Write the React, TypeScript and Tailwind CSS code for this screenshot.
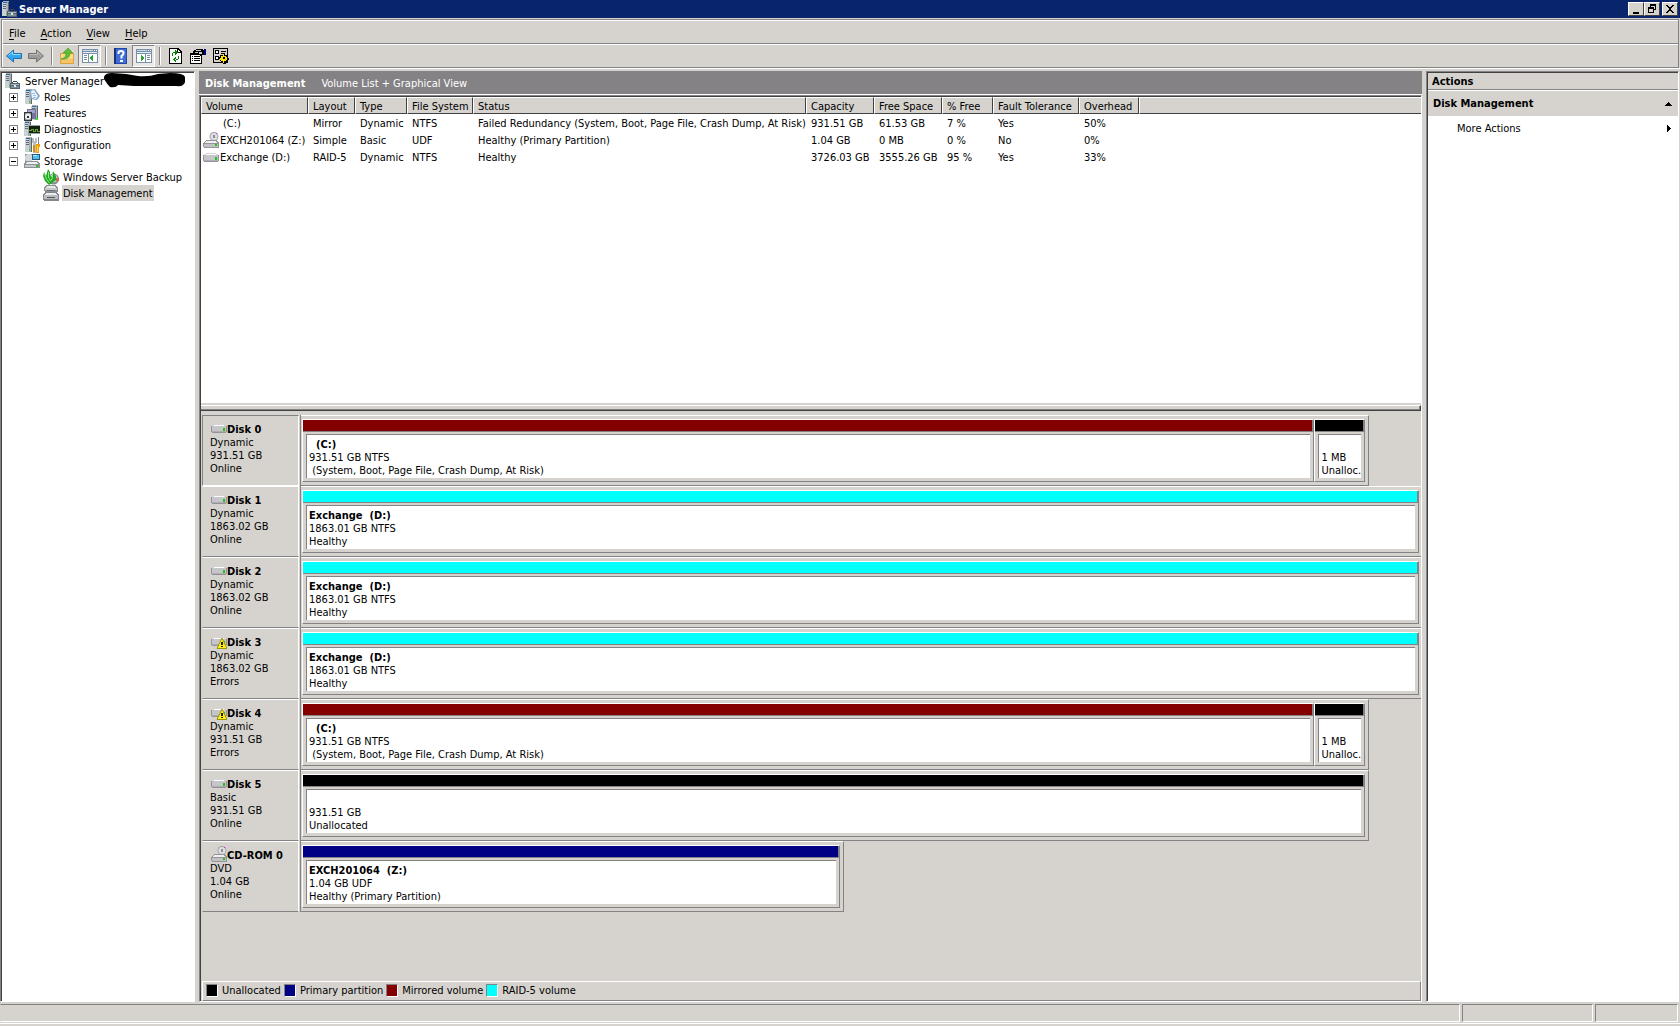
import type { ReactNode } from "react";
import clsx from "clsx";

type VolumeKind = "unallocated" | "primary" | "mirrored" | "raid5";
type DriveIconName = "drive" | "warning" | "cdrom";

interface DiskVolume {
  kind: VolumeKind;
  name?: string;
  size: string;
  status: string;
  narrow?: boolean;
}

interface Disk {
  name: string;
  icon: DriveIconName;
  type: string;
  size: string;
  state: string;
  width: number;
  selected?: boolean;
  volumes: DiskVolume[];
}

const kindColor: Record<VolumeKind, string> = {
  unallocated: "bg-black",
  primary: "bg-[#000084]",
  mirrored: "bg-[#840000]",
  raid5: "bg-[#00ffff]",
};

const columns = [
  { label: "Volume", width: "w-[107px]" },
  { label: "Layout", width: "w-[47px]" },
  { label: "Type", width: "w-[52px]" },
  { label: "File System", width: "w-[66px]" },
  { label: "Status", width: "w-[333px]" },
  { label: "Capacity", width: "w-[68px]" },
  { label: "Free Space", width: "w-[68px]" },
  { label: "% Free", width: "w-[51px]" },
  { label: "Fault Tolerance", width: "w-[86px]" },
  { label: "Overhead", width: "w-[60px]" },
];

const volumes: { name: string; icon?: DriveIconName; cells: string[] }[] = [
  {
    name: "(C:)",
    cells: ["Mirror", "Dynamic", "NTFS", "Failed Redundancy (System, Boot, Page File, Crash Dump, At Risk)", "931.51 GB", "61.53 GB", "7 %", "Yes", "50%"],
  },
  {
    name: "EXCH201064 (Z:)",
    icon: "cdrom",
    cells: ["Simple", "Basic", "UDF", "Healthy (Primary Partition)", "1.04 GB", "0 MB", "0 %", "No", "0%"],
  },
  {
    name: "Exchange (D:)",
    icon: "drive",
    cells: ["RAID-5", "Dynamic", "NTFS", "Healthy", "3726.03 GB", "3555.26 GB", "95 %", "Yes", "33%"],
  },
];

const systemVolumes: DiskVolume[] = [
  { kind: "mirrored", name: "  (C:)", size: "931.51 GB NTFS", status: " (System, Boot, Page File, Crash Dump, At Risk)" },
  { kind: "unallocated", size: "1 MB", status: "Unalloc.", narrow: true },
];

const exchangeVolumes: DiskVolume[] = [
  { kind: "raid5", name: "Exchange  (D:)", size: "1863.01 GB NTFS", status: "Healthy" },
];

const disks: Disk[] = [
  { name: "Disk 0", icon: "drive", type: "Dynamic", size: "931.51 GB", state: "Online", width: 95.4, selected: true, volumes: systemVolumes },
  { name: "Disk 1", icon: "drive", type: "Dynamic", size: "1863.02 GB", state: "Online", width: 100, volumes: exchangeVolumes },
  { name: "Disk 2", icon: "drive", type: "Dynamic", size: "1863.02 GB", state: "Online", width: 100, volumes: exchangeVolumes },
  { name: "Disk 3", icon: "warning", type: "Dynamic", size: "1863.02 GB", state: "Errors", width: 100, volumes: exchangeVolumes },
  { name: "Disk 4", icon: "warning", type: "Dynamic", size: "931.51 GB", state: "Errors", width: 95.4, volumes: systemVolumes },
  {
    name: "Disk 5",
    icon: "drive",
    type: "Basic",
    size: "931.51 GB",
    state: "Online",
    width: 95.4,
    volumes: [{ kind: "unallocated", size: "931.51 GB", status: "Unallocated" }],
  },
  {
    name: "CD-ROM 0",
    icon: "cdrom",
    type: "DVD",
    size: "1.04 GB",
    state: "Online",
    width: 48.5,
    volumes: [{ kind: "primary", name: "EXCH201064  (Z:)", size: "1.04 GB UDF", status: "Healthy (Primary Partition)" }],
  },
];

const legend: { kind: VolumeKind; label: string }[] = [
  { kind: "unallocated", label: "Unallocated" },
  { kind: "primary", label: "Primary partition" },
  { kind: "mirrored", label: "Mirrored volume" },
  { kind: "raid5", label: "RAID-5 volume" },
];

function Icon({ children }: { children: ReactNode }) {
  return (
    <svg width="16" height="16" viewBox="0 0 16 16" className="shrink-0" shapeRendering="crispEdges" aria-hidden="true">
      {children}
    </svg>
  );
}

/* ---- tree icons ---- */

function Tower({ x = 1 }: { x?: number }) {
  return (
    <g transform={`translate(${x} 0)`}>
      <path d="M0 1h1V0h6v15H0z" fill="#a9b0b6" />
      <path d="M0 1h4v14H0z" fill="#c9d0d6" />
      <path d="M1 3h3v1H1zM1 5h3v1H1zM1 7h3v1H1z" fill="#5d6c7c" />
      <path d="M1 1h4v1H1z" fill="#2c6f9e" />
      <path d="M6 1h1v14H6z" fill="#5f666c" />
      <path d="M4 12h1v2H4z" fill="#35e01e" />
    </g>
  );
}

function ServerIcon() {
  return (
    <Icon>
      <Tower x={0} />
      <path d="M5 10h10v6H5z" fill="#55626f" />
      <path d="M6 11h8v1H6z" fill="#a8b8c6" />
      <path d="M6 13h8v2H6z" fill="#7d8c9a" />
      <path d="M8 8h4v1H8zM7 9h1v1H7zM12 9h1v1h-1z" fill="#3c4650" />
      <path d="M9 12h2v2H9z" fill="#dfe6ec" />
    </Icon>
  );
}

function RolesIcon() {
  return (
    <Icon>
      <Tower />
      <path d="M6 1l5-1 5 7-3 4-6-1z" fill="#7fa3c0" shapeRendering="auto" />
      <path d="M7 2l3-1 4 6-2 3-4-1z" fill="#eaf5ff" shapeRendering="auto" />
      <path d="M8 4h3v1H8zM9 6h3v1H9zM9 8h3v1H9z" fill="#9fc4e4" />
    </Icon>
  );
}

function FeaturesIcon() {
  return (
    <Icon>
      <Tower x={7} />
      <path d="M3 4h9v10H3z" fill="#74749c" />
      <path d="M4 5h7v3H4z" fill="#a3a3ca" />
      <path d="M0 7h8v9H0z" fill="#34383e" />
      <path d="M1 8h6v7H1z" fill="#878d94" />
      <circle cx="4" cy="11.5" r="3" fill="#eee" shapeRendering="auto" />
      <path d="M3 11h2v2H3z" fill="#333" />
      <path d="M12 13h2v2h-2z" fill="#35e01e" />
    </Icon>
  );
}

function DiagnosticsIcon() {
  return (
    <Icon>
      <Tower x={0} />
      <path d="M4 4h12v9H4z" fill="#9aa3a8" />
      <path d="M5 5h11v7H5z" fill="#14210f" />
      <path d="M5 9h2v-1h2v2h2V8h2v2h3" fill="none" stroke="#6ca033" />
    </Icon>
  );
}

function ConfigurationIcon() {
  return (
    <Icon>
      <Tower x={1} />
      <path d="M8 1h2v3h1V1h2v4l-1 2v9H9V7L8 5z" fill="#b8bec4" />
      <path d="M9 8h2v7H9z" fill="#e08a00" />
      <path d="M14 0h1v7h-1z" fill="#7c848b" />
      <path d="M12 7h4v3h-1v6h-3z" fill="#f0a010" />
      <path d="M13 9h1v6h-1z" fill="#ffd35a" />
    </Icon>
  );
}

function StorageIcon() {
  return (
    <Icon>
      <path d="M1 1h7v8H1z" fill="#8d949a" />
      <circle cx="5" cy="5" r="4" fill="#d4d8dc" shapeRendering="auto" />
      <path d="M8 1h8v6H8z" fill="#2b587c" />
      <path d="M9 2h6v4H9z" fill="#52bff0" />
      <path d="M9 2h4v1H9z" fill="#bcecff" />
      <path d="M2 8h12l2 3v4H0v-4z" fill="#8e9296" />
      <path d="M3 9h10l1 2H1z" fill="#eceef0" />
      <path d="M1 12h13v2H1z" fill="#c6c9cc" />
      <path d="M12 12h2v2h-2z" fill="#1fc41f" />
    </Icon>
  );
}

function BackupIcon() {
  return (
    <Icon>
      <circle cx="10.500" cy="10" r="5.500" fill="#84888b" shapeRendering="auto" />
      <circle cx="10.500" cy="9.500" r="4" fill="#c9c9c9" shapeRendering="auto" />
      <path d="M13 9h3v3h-3z" fill="#c96b4c" />
      <path d="M5 0l2 3v4l2 1 1-6 3 5v4l-4 3-3 2-4-4-2-5 1-4 2 4z" fill="#27a52b" shapeRendering="auto" />
      <path d="M1.500 5l2 5 3 4M5.500 3v5l2 4 2-3V5" fill="none" stroke="#83ef70" shapeRendering="auto" />
    </Icon>
  );
}

function DiskManagementIcon() {
  return (
    <Icon>
      <path d="M3 0h10l2 3v3l-1 1H2L1 6V3z" fill="#8c8f93" />
      <path d="M4 1h8l1 2H3z" fill="#e6e7e8" />
      <path d="M2 3h12v2H2z" fill="#c6c8ca" />
      <path d="M4 5h8v1H4z" fill="#6e7276" />
      <path d="M2 7h12l2 3v5l-1 1H1l-1-1v-5z" fill="#83868a" />
      <path d="M3 8h10l1 2H2z" fill="#eceded" />
      <path d="M1 10h14v4H1z" fill="#b9bbbd" />
      <path d="M4 12h8v1H4z" fill="#54575a" />
    </Icon>
  );
}

/* ---- drive icons ---- */

function DriveIcon({ name }: { name: DriveIconName }) {
  if (name === "cdrom") {
    return (
      <Icon>
        <circle cx="11" cy="4.500" r="4.500" fill="#a4a4aa" shapeRendering="auto" />
        <circle cx="11" cy="4.500" r="3.500" fill="#dedee4" shapeRendering="auto" />
        <path d="M10 3h2v3h-2z" fill="#8c8c92" />
        <path d="M13 1h1v1h-1z" fill="#e020e0" />
        <path d="M3 8h10l3 3v4l-1 1H1l-1-1v-4z" fill="#949496" />
        <path d="M3 9h10l1 2H1z" fill="#f0f0f0" />
        <path d="M1 12h14v3H1z" fill="#c2c2c4" />
        <path d="M12 12h2v2h-2z" fill="#18c818" />
      </Icon>
    );
  }
  return (
    <Icon>
      <path d="M3 4h10v1h2v1h1v6h-1v1H1v-1H0V6h1V5h2z" fill="#949498" />
      <path d="M3 4h10v1h2v1H1V5h2z" fill="#d4d4d8" />
      <path d="M3 5h10v1H3z" fill="#fff" />
      <path d="M1 6h14v5H1z" fill="#c6c6ca" />
      <path d="M1 11h14v1H1z" fill="#adadb2" />
      <path d="M12 8h2v3h-2z" fill="#18c818" />
      {name === "warning" && (
        <g transform="translate(0 1)">
          <path d="M11 4L16 14.500H6z" fill="#fff01a" stroke="#9c9400" strokeWidth="1" strokeLinejoin="round" shapeRendering="auto" />
          <path d="M10 8h2v3h-2zM10 12h2v1h-2z" fill="#211f00" />
        </g>
      )}
    </Icon>
  );
}

/* ---- toolbar icons ---- */

function ArrowIcon({ back = false }: { back?: boolean }) {
  return (
    <svg width="16" height="16" viewBox="0 0 16 16" className="shrink-0" aria-hidden="true">
      <g transform={back ? undefined : "matrix(-1 0 0 1 16 0)"}>
        <path d="M.5 8L7.500 2v3.500h8v5h-8V14z" fill={back ? "#35a5ee" : "#9c9c9c"} stroke={back ? "#1b6fb4" : "#707070"} />
        <path d="M2.500 7.500L6.500 4v2.500h8" fill="none" stroke={back ? "#8fd9ff" : "#bdbdbd"} />
      </g>
    </svg>
  );
}

function UpFolderIcon() {
  return (
    <Icon>
      <path d="M1 5h5l1-2h7v2h1v11H1z" fill="#d9a441" />
      <path d="M2 6h12v8H2z" fill="#fbd98a" />
      <path d="M2 11h12v4H2z" fill="#f3c468" />
      <path d="M10 3h4v2h-4z" fill="#fff4cf" />
      <path d="M2 11c4-1 5-3 5-6H4l5-5 5 5h-3c0 4-3 7-9 6z" fill="#5cc034" stroke="#3a8a1e" strokeWidth=".5" shapeRendering="auto" />
    </Icon>
  );
}

function PaneIcon({ right = false }: { right?: boolean }) {
  return (
    <Icon>
      <path d="M0 1h16v14H0z" fill="#7890a8" />
      <path d="M1 2h10v1H1z" fill="#c9daea" />
      <path d="M12 2h1v1h-1zM14 2h1v1h-1z" fill="#fff" />
      <path d="M1 4h14v1H1z" fill="#e7eef5" />
      {right ? (
        <>
          <path d="M1 6h8v8H1zM10 6h5v8h-5z" fill="#fff" />
          <path d="M11 7h3v1h-3zM11 9h3v1h-3zM11 11h3v1h-3z" fill="#7890a8" />
          <path d="M5 7h1v1h1v1h1v2H7v1H6v1H5z" fill="#2fa52f" />
        </>
      ) : (
        <>
          <path d="M1 6h5v8H1zM7 6h8v8H7z" fill="#fff" />
          <path d="M2 7h3v1H2zM2 9h3v1H2zM2 11h3v1H2z" fill="#7890a8" />
          <path d="M11 7h-1v1H9v1H8v2h1v1h1v1h1z" fill="#2fa52f" />
        </>
      )}
    </Icon>
  );
}

function HelpIcon() {
  return (
    <Icon>
      <path d="M1 0h13v16H1z" fill="#2347a8" />
      <path d="M3 1h10v14H3z" fill="#3f6fd6" />
      <path d="M1 0h2v16H1z" fill="#17337c" />
      <path d="M5.500 6V4.500Q5.500 3 8 3t2.500 2.200Q10.500 7 8.500 8v2.500" fill="none" stroke="#fff" strokeWidth="2" shapeRendering="auto" />
      <path d="M7 12h3v2H7z" fill="#fff" />
    </Icon>
  );
}

function RefreshIcon() {
  return (
    <Icon>
      <path d="M2 0h9l4 4v12H2z" fill="#000" />
      <path d="M3 1h7v4h4v10H3z" fill="#fff" />
      <path d="M11 2l2 2h-2z" fill="#fff" />
      <path d="M6 4h3v1H6zM5 5h1v3H5zM8 2h1v5H8zM9 3h1v3H9zM10 4h1v1h-1z" fill="#008000" />
      <path d="M8 12h3v-1H8zM11 8h1v3h-1zM8 9h1v5H8zM7 10h1v3H7zM6 11h1v1H6z" fill="#008000" />
    </Icon>
  );
}

function PropertiesIcon() {
  return (
    <Icon>
      <path d="M0 5h12v11H0z" fill="#000" />
      <path d="M1 7h10v8H1z" fill="#fff" />
      <path d="M2 8h1v1H2zM4 8h6v1H4zM2 10h1v1H2zM4 10h6v1H4zM2 12h1v1H2zM4 12h6v1H4z" fill="#000" />
      <path d="M4 2h2V1h7v1h1v5h-2v1h-2V7H7V6H5V5H3V3h1z" fill="#000" />
      <path d="M6 2h5v1H6zM5 4h3v1H5zM9 4h3v2H9z" fill="#c9c9c9" />
      <path d="M14 1h2v6h-2z" fill="#000084" />
    </Icon>
  );
}

function SettingsIcon() {
  return (
    <Icon>
      <path d="M0 0h15v15H0z" fill="#000" />
      <path d="M1 1h13v13H1z" fill="#d6d3ce" />
      <path d="M2 2h4v4H2zM2 8h4v4H2z" fill="#000" />
      <path d="M3 3h2v2H3zM3 9h2v2H3z" fill="#fff" />
      <path d="M8 3h5v1H8zM8 5h3v1H8z" fill="#000" />
      <path d="M10 5h2v2h2l1 1v2h1v2h-1v2h-2v2h-3v-2H8l-1-1v-2H6V9h1V7h3z" fill="#000" />
      <path d="M10 6h1v2h2v1h1v3h-1v1h-2v2h-1v-2H8v-1H7v-2h1V8h2z" fill="#ffe600" />
      <path d="M10 9h2v2h-2z" fill="#000" />
    </Icon>
  );
}

/* ---- window chrome ---- */

function CaptionButton({ label, children }: { label: string; children: ReactNode }) {
  return (
    <button
      type="button"
      aria-label={label}
      className="flex h-[14px] w-4 items-center justify-center border border-t-white border-r-[#424142] border-b-[#424142] border-l-white bg-[#d6d3ce]"
    >
      <svg width="10" height="10" viewBox="0 0 10 10" shapeRendering="crispEdges" aria-hidden="true">
        {children}
      </svg>
    </button>
  );
}

function TitleBar() {
  return (
    <header className="flex h-[18px] items-center bg-[#08246b] px-[2px] text-white">
      <ServerIcon />
      <h1 className="ml-px flex-1 text-[11px] leading-[13px] font-bold">Server Manager</h1>
      <div className="flex">
        <CaptionButton label="Minimize">
          <path d="M2 8h6v2H2z" />
        </CaptionButton>
        <CaptionButton label="Restore">
          <path d="M3 0h6v6H7V5h1V2H4v1H3z" />
          <path d="M1 3h6v6H1zM2 5v3h4V5z" fillRule="evenodd" />
        </CaptionButton>
        <span className="w-[2px]" />
        <CaptionButton label="Close">
          <path d="M1 1h2v1h1v1h2V2h1V1h2v1H8v1H7v1H6v2h1v1h1v1h1v1H7V8H6V7H4v1H3v1H1V8h1V7h1V6h1V4H3V3H2V2H1z" />
        </CaptionButton>
      </div>
    </header>
  );
}

function MenuBar() {
  return (
    <nav className="flex h-[23px] items-center gap-[15px] border-b border-[#848284] pt-[2px] pl-[6px]">
      {["File", "Action", "View", "Help"].map((item) => (
        <button key={item} type="button">
          <span className="underline underline-offset-2">{item[0]}</span>
          {item.slice(1)}
        </button>
      ))}
    </nav>
  );
}

function ToolButton({ label, pressed = false, children }: { label: string; pressed?: boolean; children: ReactNode }) {
  return (
    <button
      type="button"
      aria-label={label}
      aria-pressed={pressed}
      className={clsx(
        "flex h-[22px] items-center justify-center border",
        pressed
          ? "w-[23px] border-t-[#848284] border-r-white border-b-white border-l-[#848284] bg-[#ebe9e7]"
          : "w-[22px] border-transparent",
      )}
    >
      {children}
    </button>
  );
}

function Separator() {
  return <span className="mr-[3px] ml-1 h-[18px] w-[2px] border-l border-[#848284] bg-white" />;
}

function Toolbar() {
  return (
    <div className="flex h-[23px] items-center border-t border-white" role="toolbar">
      <ToolButton label="Back">
        <ArrowIcon back />
      </ToolButton>
      <ToolButton label="Forward">
        <ArrowIcon />
      </ToolButton>
      <Separator />
      <ToolButton label="Up one level">
        <UpFolderIcon />
      </ToolButton>
      <ToolButton label="Show console tree" pressed>
        <PaneIcon />
      </ToolButton>
      <Separator />
      <ToolButton label="Help">
        <HelpIcon />
      </ToolButton>
      <ToolButton label="Show action pane" pressed>
        <PaneIcon right />
      </ToolButton>
      <Separator />
      <div className="flex gap-px">
        <ToolButton label="Refresh">
          <RefreshIcon />
        </ToolButton>
        <ToolButton label="Properties">
          <PropertiesIcon />
        </ToolButton>
        <ToolButton label="Settings">
          <SettingsIcon />
        </ToolButton>
      </div>
    </div>
  );
}

/* ---- console tree ---- */

function Expander({ open = false }: { open?: boolean }) {
  return (
    <button type="button" aria-label={open ? "Collapse" : "Expand"} className="mr-[6px]">
      <svg width="9" height="9" viewBox="0 0 9 9" shapeRendering="crispEdges" aria-hidden="true">
        <path d="M0 0h9v9H0z" fill="#848284" />
        <path d="M1 1h7v7H1z" fill="#fff" />
        <path d={open ? "M2 4h5v1H2z" : "M2 4h5v1H2zM4 2h1v5H4z"} />
      </svg>
    </button>
  );
}

function TreeRow({ indent, selected = false, icon, children }: { indent: string; selected?: boolean; icon: ReactNode; children: ReactNode }) {
  return (
    <li className={clsx("flex h-4 items-center whitespace-nowrap", indent)}>
      {icon}
      <span className={clsx("ml-[3px] h-4 px-px leading-[18px]", selected && "bg-[#d6d3ce]")}>{children}</span>
    </li>
  );
}

function ConsoleTree() {
  return (
    <aside className="w-[195px] shrink-0 border border-t-[#848284] border-r-white border-b-white border-l-[#848284]">
      <ul className="h-full border-t border-l border-[#424142] bg-white">
        <TreeRow indent="pl-[3px]" icon={<ServerIcon />}>
          <span className="flex items-start">
            Server Manager
            <svg width="82" height="15" viewBox="0 0 82 15" aria-hidden="true">
              <path d="M0 4Q1 0 8 0L22 1 34 3Q45 4 54 1L66 0Q80 0 81 4V9Q80 14 72 13L30 13 14 12Q12 15 6 14Q3 11 0 6Z" />
            </svg>
          </span>
        </TreeRow>
        <TreeRow indent="pl-[7px]" icon={<><Expander /><RolesIcon /></>}>Roles</TreeRow>
        <TreeRow indent="pl-[7px]" icon={<><Expander /><FeaturesIcon /></>}>Features</TreeRow>
        <TreeRow indent="pl-[7px]" icon={<><Expander /><DiagnosticsIcon /></>}>Diagnostics</TreeRow>
        <TreeRow indent="pl-[7px]" icon={<><Expander /><ConfigurationIcon /></>}>Configuration</TreeRow>
        <TreeRow indent="pl-[7px]" icon={<><Expander open /><StorageIcon /></>}>Storage</TreeRow>
        <TreeRow indent="pl-[41px]" icon={<BackupIcon />}>Windows Server Backup</TreeRow>
        <TreeRow indent="pl-[41px]" icon={<DiskManagementIcon />} selected>Disk Management</TreeRow>
      </ul>
    </aside>
  );
}

/* ---- volume list ---- */

function VolumeList() {
  return (
    <div className="h-[306px] shrink-0 overflow-hidden bg-white">
      <table className="w-full table-fixed border-collapse text-left whitespace-nowrap">
        <thead>
          <tr className="h-[17px]">
            {columns.map((column) => (
              <th key={column.label} className={clsx("p-0 font-normal", column.width)}>
                <div className="h-[17px] border border-t-white border-r-[#424142] border-b-[#424142] border-l-white bg-[#d6d3ce] pl-1 leading-[17px]">
                  {column.label}
                </div>
              </th>
            ))}
            <th className="p-0" aria-hidden="true">
              <div className="h-[17px] border-t border-b border-l border-t-white border-b-[#424142] border-l-white bg-[#d6d3ce]" />
            </th>
          </tr>
        </thead>
        <tbody>
          {volumes.map((volume) => (
            <tr key={volume.name} className="h-[17px]">
              <td className="p-0">
                <div className={clsx("flex h-[17px] items-center", volume.icon ? "pl-[2px]" : "pl-[21px]")}>
                  {volume.icon && <DriveIcon name={volume.icon} />}
                  <span className="ml-px pt-[2px]">{volume.name}</span>
                </div>
              </td>
              {volume.cells.map((cell, i) => (
                <td key={i} className="p-0 pt-[2px] pl-[5px]">
                  {cell}
                </td>
              ))}
              <td />
            </tr>
          ))}
        </tbody>
      </table>
    </div>
  );
}

/* ---- graphical view ---- */

function VolumeBlock({ volume }: { volume: DiskVolume }) {
  return (
    <div
      className={clsx(
        "flex flex-col border border-t-white border-r-[#848284] border-b-[#848284] border-l-white",
        volume.narrow ? "w-[51px] shrink-0" : "min-w-0 flex-1",
      )}
    >
      <div className="border-r border-b border-[#848284]">
        <div className={clsx("h-[11px]", kindColor[volume.kind])} />
      </div>
      <div className="mx-[3px] mt-[2px] mb-[3px] h-[44px] border-t border-l border-[#848284] bg-white pt-[3px] pl-[2px] leading-[13px] whitespace-pre">
        <p className="h-[13px] font-bold">{volume.name}</p>
        <p>{volume.size}</p>
        <p>{volume.status}</p>
      </div>
    </div>
  );
}

function DiskRow({ disk }: { disk: Disk }) {
  return (
    <div className="flex h-[71px]">
      <div
        className={clsx(
          "w-[97px] shrink-0 border pt-[7px] pl-[7px] leading-[13px]",
          disk.selected
            ? "border-t-[#848284] border-r-white border-b-white border-l-[#848284]"
            : "border-t-white border-r-white border-b-[#848284] border-l-[#d6d3ce]",
        )}
      >
        <h2 className="flex h-[13px] items-center font-bold whitespace-nowrap">
          <span className="-mt-[3px] ml-px">
            <DriveIcon name={disk.icon} />
          </span>
          {disk.name}
        </h2>
        <p>{disk.type}</p>
        <p>{disk.size}</p>
        <p>{disk.state}</p>
      </div>
      <div className="w-[2px] shrink-0 border-r border-[#848284]" />
      <div className="min-w-0 flex-1">
        <div
          className={clsx(
            "flex h-full border-t border-b border-t-white border-b-[#848284] py-[3px] pl-px",
            disk.width < 100 ? "border-r border-r-[#848284] pr-[3px]" : "pr-[2px]",
          )}
          style={{ width: `${disk.width}%` }}
        >
          {disk.volumes.map((volume) => (
            <VolumeBlock key={volume.size} volume={volume} />
          ))}
        </div>
      </div>
    </div>
  );
}

function Legend() {
  return (
    <ul className="flex h-5 items-center gap-[3px] border border-t-white border-r-[#848284] border-b-[#848284] border-l-white pb-px pl-[3px] whitespace-nowrap">
      {legend.map((item) => (
        <li key={item.kind} className="flex items-center">
          <span
            className={clsx(
              "mr-1 h-[13px] w-3 shrink-0 border border-t-[#848284] border-r-white border-b-white border-l-[#848284]",
              kindColor[item.kind],
            )}
          />
          {item.label}
        </li>
      ))}
    </ul>
  );
}

function DiskManagement() {
  return (
    <main className="flex min-w-0 flex-1 flex-col">
      <div className="flex h-[23px] shrink-0 items-center bg-[#848284] pt-px pl-[6px] text-white">
        <h2 className="text-[11px] font-bold">Disk Management</h2>
        <span className="ml-4">Volume List + Graphical View</span>
      </div>
      <div className="h-px bg-white" />
      <div className="flex flex-1 flex-col border border-t-[#848284] border-r-white border-b-white border-l-[#848284]">
        <div className="flex flex-1 flex-col border-t border-l border-[#424142]">
          <VolumeList />
          <div className="mt-[2px] h-[6px] shrink-0 border-t border-r border-b border-t-white border-r-[#424142] border-b-[#424142]">
            <div className="h-full border-r border-b border-[#848284]" />
          </div>
          <div className="flex flex-1 flex-col pt-1 pl-px">
            {disks.map((disk) => (
              <DiskRow key={disk.name} disk={disk} />
            ))}
            <div className="flex-1" />
            <Legend />
          </div>
        </div>
      </div>
    </main>
  );
}

function ActionsPane() {
  return (
    <aside className="mr-px w-[253px] shrink-0 border border-t-[#848284] border-r-white border-b-white border-l-[#848284]">
      <div className="h-full border-t border-l border-[#424142] bg-white">
        <h2 className="flex h-[17px] items-center border-b border-[#848284] bg-[#d6d3ce] pt-px pl-1 text-[11px] font-bold">
          Actions
        </h2>
        <button type="button" className="mt-px flex h-[25px] w-full items-center bg-[#d6d3ce] pr-[6px] pl-[5px] text-left font-bold">
          <span className="flex-1">Disk Management</span>
          <svg width="7" height="4" viewBox="0 0 7 4" shapeRendering="crispEdges" aria-hidden="true">
            <path d="M3 0h1v1h1v1h1v1h1v1H0V3h1V2h1V1h1z" />
          </svg>
        </button>
        <button type="button" className="flex h-6 w-full items-center pr-[7px] pl-[29px] text-left">
          <span className="flex-1">More Actions</span>
          <svg width="4" height="7" viewBox="0 0 4 7" shapeRendering="crispEdges" aria-hidden="true">
            <path d="M0 0h1v1h1v1h1v1h1v1H3v1H2v1H1v1H0z" />
          </svg>
        </button>
      </div>
    </aside>
  );
}

function StatusBar() {
  const cell = "h-[18px] border border-t-[#848284] border-r-white border-b-white";
  return (
    <footer className="pt-[2px]">
      <div className="flex h-5 gap-[2px] border-b border-white pr-[2px]">
        <div className={clsx(cell, "flex-1 border-l-[#d6d3ce]")} />
        <div className={clsx(cell, "w-[131px] border-l-[#848284]")} />
        <div className={clsx(cell, "w-[83px] border-l-[#848284]")} />
      </div>
      <div className="h-[2px]" />
    </footer>
  );
}

export default function App() {
  return (
    <div className="flex min-h-screen flex-col bg-[#d6d3ce] font-['DejaVu_Sans_Condensed','DejaVu_Sans',sans-serif] text-[11px] leading-[13px] text-black">
      <TitleBar />
      <div className="mx-px mt-px border border-[#848284]">
        <div className="border-t border-l border-white">
          <MenuBar />
          <Toolbar />
        </div>
      </div>
      <div className="h-[3px] border-t border-white" />
      <div className="flex flex-1 gap-1">
        <ConsoleTree />
        <DiskManagement />
        <ActionsPane />
      </div>
      <StatusBar />
    </div>
  );
}
